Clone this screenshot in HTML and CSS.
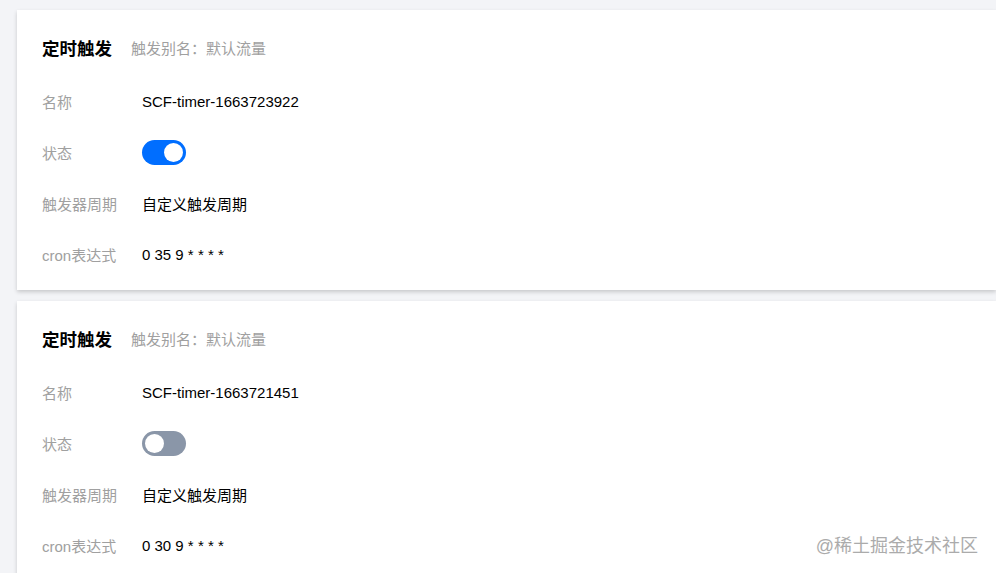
FILE: index.html
```html
<!DOCTYPE html>
<html lang="zh-CN">
<head>
    <meta charset="UTF-8">
    <meta name="viewport" content="width=device-width, initial-scale=1.0">
    <title>定时触发</title>
    <link rel="stylesheet" href="styles.css">
</head>
<body>
    <div class="page">
        <div class="card">
            <div class="card-head">
                <h2>定时触发</h2>
                <span class="alias">触发别名：默认流量</span>
            </div>
            <div class="row">
                <span class="label">名称</span>
                <span class="value">SCF-timer-1663723922</span>
            </div>
            <div class="row">
                <span class="label">状态</span>
                <span class="switch on"><i></i></span>
            </div>
            <div class="row">
                <span class="label">触发器周期</span>
                <span class="value">自定义触发周期</span>
            </div>
            <div class="row">
                <span class="label">cron表达式</span>
                <span class="value">0 35 9 * * * *</span>
            </div>
        </div>

        <div class="card">
            <div class="card-head">
                <h2>定时触发</h2>
                <span class="alias">触发别名：默认流量</span>
            </div>
            <div class="row">
                <span class="label">名称</span>
                <span class="value">SCF-timer-1663721451</span>
            </div>
            <div class="row">
                <span class="label">状态</span>
                <span class="switch"><i></i></span>
            </div>
            <div class="row">
                <span class="label">触发器周期</span>
                <span class="value">自定义触发周期</span>
            </div>
            <div class="row">
                <span class="label">cron表达式</span>
                <span class="value">0 30 9 * * * *</span>
            </div>
        </div>
    </div>

    <div class="watermark">@稀土掘金技术社区</div>
</body>
</html>
```

FILE: styles.css
```css
html, body {
    margin: 0;
    height: 100%;
    overflow: hidden;
}
body {
    font-family: Arial, "Liberation Sans", "Noto Sans CJK SC", sans-serif;
    background-color: #f3f4f7;
    color: #000;
}
.page {
    padding: 10px 0 0 17px;
    display: flex;
    flex-direction: column;
    gap: 11px;
}
.card {
    background: #fff;
    padding: 25px 0 10px 25px;
    box-shadow: 0 2px 4px rgba(0,0,0,0.18);
}
.card-head {
    display: flex;
    align-items: center;
    gap: 19px;
    height: 24px;
    margin-bottom: 17px;
}
.card-head h2 {
    margin: 0;
    font-size: 17.5px;
    font-weight: bold;
    color: #000;
}
.alias {
    font-size: 15px;
    color: #a0a0a0;
}
.row {
    display: flex;
    align-items: center;
    height: 51px;
}
.label {
    width: 100px;
    font-size: 15px;
    color: #a0a0a0;
}
.value {
    font-size: 15px;
    color: #000;
}
.switch {
    position: relative;
    width: 44px;
    height: 25px;
    border-radius: 13px;
    background-color: #8a96a8;
}
.switch i {
    position: absolute;
    top: 3px;
    left: 3px;
    width: 19px;
    height: 19px;
    border-radius: 50%;
    background: #fff;
}
.switch.on {
    background-color: #006eff;
}
.switch.on i {
    left: 22px;
}
.watermark {
    position: absolute;
    right: 18px;
    bottom: 16px;
    font-size: 18px;
    color: #a3a3a3;
    opacity: 0.9;
}
```
